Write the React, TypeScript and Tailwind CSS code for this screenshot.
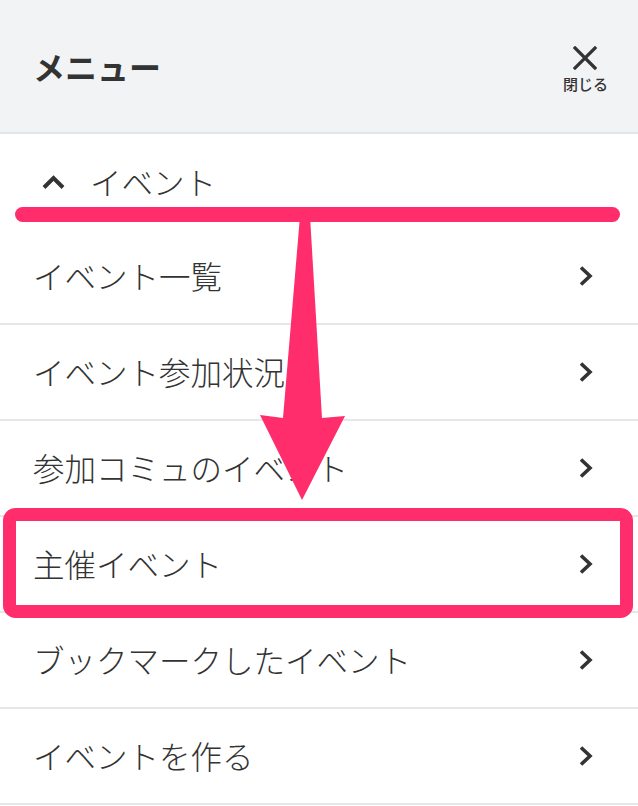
const items = [
  'イベント一覧',
  'イベント参加状況',
  '参加コミュのイベント',
  '主催イベント',
  'ブックマークしたイベント',
  'イベントを作る',
]

function Annotations() {
  return (
    <svg className="pointer-events-none absolute inset-0" width="638" height="806" viewBox="0 0 638 806">
      <rect x="15" y="207" width="605" height="15" rx="7.5" fill="#ff2d6b" />
      <polygon
        points="300,216 310,216 322,418 345,416 302,500 260,415 283,418"
        fill="#ff2d6b"
      />
      <rect x="9.5" y="514.5" width="617" height="97" rx="6" fill="none" stroke="#ff2d6b" strokeWidth="13" />
    </svg>
  )
}

function Chevron() {
  return (
    <svg width="16" height="22" viewBox="0 0 16 22" fill="none" stroke="#333" strokeWidth="3.6" strokeLinecap="butt" strokeLinejoin="miter">
      <path d="M3 2.5 L12 11 L3 19.5" />
    </svg>
  )
}

export default function App() {
  return (
    <div className="relative h-[806px] w-[638px] overflow-hidden bg-white font-['Noto_Sans_CJK_JP',sans-serif] text-[#333]">
      {/* Header */}
      <div className="flex h-[134px] items-center justify-between border-b-2 border-[#e4e5e7] bg-[#f2f3f5] pl-[33px] pr-[30px]">
        <h1 className="text-[32px] font-bold leading-none">メニュー</h1>
        <button className="flex flex-col items-center gap-[6px] pt-[4px]">
          <svg width="24" height="24" viewBox="0 0 24 24" fill="none" stroke="#333" strokeWidth="3.2" strokeLinecap="square">
            <path d="M2 2 L22 22 M22 2 L2 22" />
          </svg>
          <span className="text-[15px] font-medium leading-none">閉じる</span>
        </button>
      </div>

      {/* Section */}
      <div className="flex h-[95px] items-center gap-[25px] pl-[42px]">
        <svg width="23" height="14" viewBox="0 0 23 14" fill="none" stroke="#333" strokeWidth="4" strokeLinejoin="miter">
          <path d="M2 12.5 L11.5 3 L21 12.5" />
        </svg>
        <span className="text-[31.5px] font-light leading-none">イベント</span>
      </div>

      {/* Items */}
      <ul>
        {items.map((label) => (
          <li
            key={label}
            className="flex h-[96px] items-center justify-between border-b-2 border-[#e6e6eb] pl-[33px] pr-[44px]"
          >
            <span className="text-[31.5px] font-light leading-none">{label}</span>
            <Chevron />
          </li>
        ))}
      </ul>

      <Annotations />
    </div>
  )
}
